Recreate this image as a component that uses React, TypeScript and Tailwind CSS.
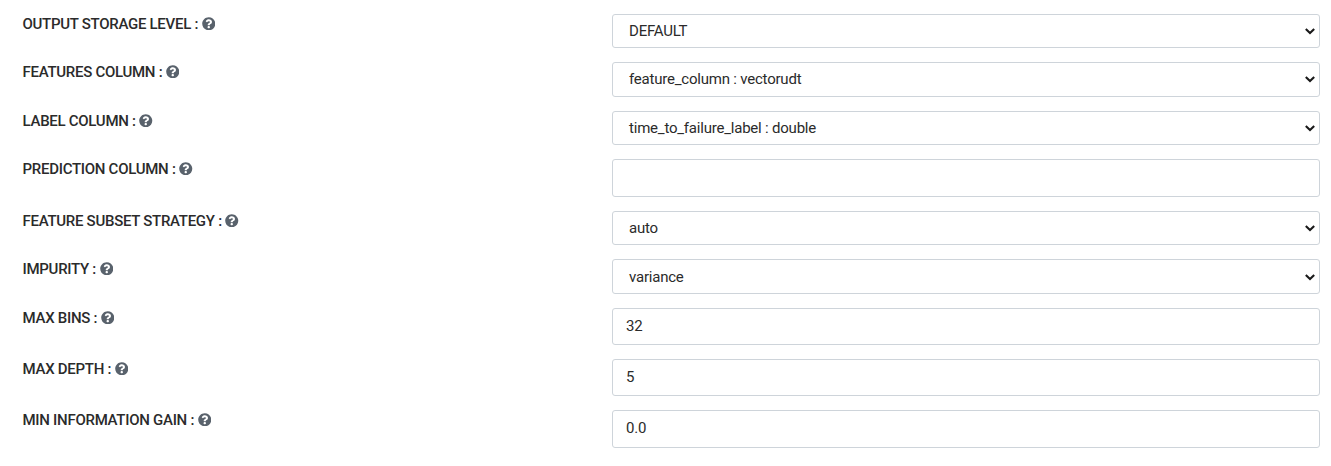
import React from "react";
import { FaQuestionCircle } from "react-icons/fa";

type Field = { label: string; value: string; select?: boolean; row: string; box: string };

const fields: Field[] = [
  { label: "OUTPUT STORAGE LEVEL", value: "DEFAULT", select: true, row: "h-12", box: "h-[34px]" },
  { label: "FEATURES COLUMN", value: "feature_column : vectorudt", select: true, row: "h-[49px]", box: "h-[35px] pb-px" },
  { label: "LABEL COLUMN", value: "time_to_failure_label : double", select: true, row: "h-12", box: "h-[34px]" },
  { label: "PREDICTION COLUMN", value: "", row: "h-[52px]", box: "h-[38px]" },
  { label: "FEATURE SUBSET STRATEGY", value: "auto", select: true, row: "h-12", box: "h-[34px]" },
  { label: "IMPURITY", value: "variance", select: true, row: "h-[49px]", box: "h-[35px] pt-px" },
  { label: "MAX BINS", value: "32", row: "h-[51px]", box: "h-[37px] pb-px" },
  { label: "MAX DEPTH", value: "5", row: "h-[51px]", box: "h-[37px] pb-px" },
  { label: "MIN INFORMATION GAIN", value: "0.0", row: "h-[51px]", box: "h-[38px] pb-0.5" },
];

function Chevron() {
  return (
    <svg width="10" height="7" viewBox="0 0 10 7" fill="none" className="shrink-0">
      <path d="M0.8 1l4.2 4 4.2-4" stroke="#1a1a1a" strokeWidth="2.1" />
    </svg>
  );
}

export default function App() {
  return (
    <main className="h-[466px] overflow-hidden bg-white pt-[14px] pr-[11px] pl-[22.5px] font-['Roboto',sans-serif] text-[#2b2b2b]">
      {fields.map((f) => (
        <div key={f.label} className={`flex items-start ${f.row}`}>
          <div className="flex w-[589.5px] shrink-0 items-center text-[15px] leading-5 font-medium tracking-[-0.28px]">
            <span>{f.label} :</span>
            <FaQuestionCircle className="mb-px ml-[3.6px] size-[13.5px] text-[#59626c]" />
          </div>
          <div
            className={`flex min-w-0 flex-1 items-center justify-between rounded-[3px] border border-[#ced4da] text-[15px] tracking-[-0.21px] ${
              f.select ? "pr-1 pl-4" : "pl-[13px]"
            } ${f.box}`}
          >
            <span>{f.value}</span>
            {f.select && <Chevron />}
          </div>
        </div>
      ))}
    </main>
  );
}
